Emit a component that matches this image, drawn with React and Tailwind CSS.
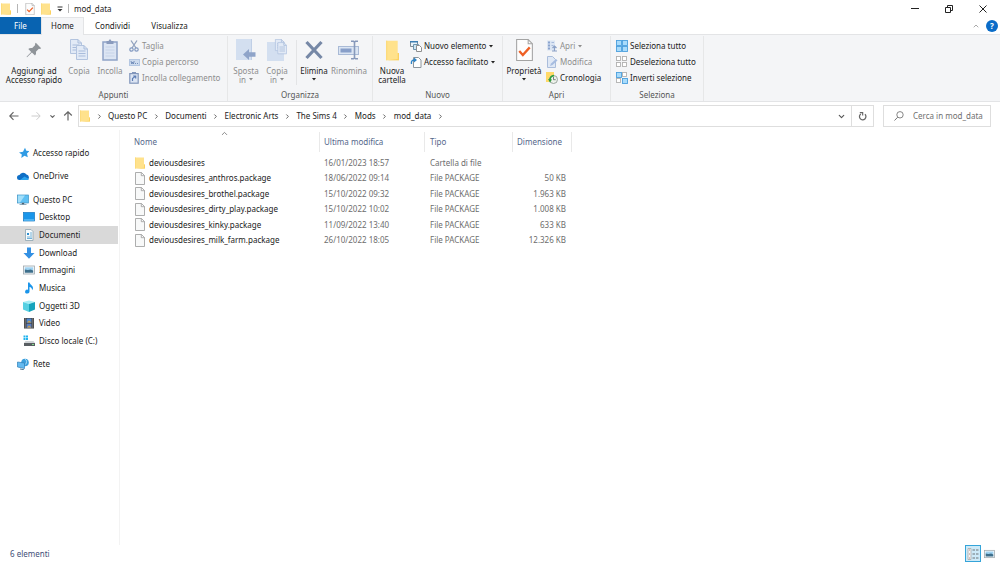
import { ChevronDown, ChevronRight, ChevronUp } from 'lucide-react';

function FolderIcon({ className }) {
  return (
    <svg viewBox="0 0 10 13" className={className} preserveAspectRatio="none">
      <path d="M0 .5h9v7.500h1v4.500H0z" fill="#ffe28c" />
      <path d="M9 8h1v4.500H1l8-.8z" fill="#fbd160" />
      <path d="M0 .5h1v12H0z" fill="#fcdb7c" />
    </svg>
  );
}

function FileIcon() {
  return (
    <svg viewBox="0 0 10 13" className="h-[13px] w-[10px] shrink-0">
      <path d="M.5.5h6l3 3v9h-9z" fill="#f8f9f9" stroke="#999" strokeWidth=".8" />
      <path d="M6.3.5v3.2h3.2" fill="none" stroke="#999" strokeWidth=".8" />
    </svg>
  );
}

function CheckPage({ className }) {
  return (
    <svg viewBox="0 0 16 21" className={className}>
      <path d="M.5.5h11l4 4v16H.5z" fill="#fdfdfd" stroke="#a3a3a3" />
      <path d="M11.5.5v4h4" fill="none" stroke="#a3a3a3" />
      <path d="M3 11.5l3.4 3.7L13 8" fill="none" stroke="#ee5f24" strokeWidth="2.2" />
    </svg>
  );
}

function PinIcon() {
  return (
    <svg viewBox="0 0 16 16" className="h-4 w-4">
      <path d="M9.800.8l5.400 5.400-1.300.9-1-.3-3 3c.4 1.600 0 2.800-.9 3.800L5.900 10.500 1 15.200l-.4-.4 4.600-4.900L2.300 7c1-.9 2.300-1.300 3.900-.9l3-3-.3-1z" fill="#8f9499" />
    </svg>
  );
}

function Page({ x, y }) {
  return (
    <g transform={`translate(${x} ${y})`}>
      <path d="M.5.5h7.500l3.500 3.500v10.500H.5z" fill="#e2eaf6" stroke="#b3c4df" />
      <path d="M8 .5V4h3.500M2.500 6h7M2.500 8.500h7M2.500 11h7" fill="none" stroke="#a9bcdb" />
    </g>
  );
}

function CopyIcon() {
  return (
    <svg viewBox="0 0 19 22" className="h-[22px] w-[19px]">
      <Page x={0} y={0} />
      <Page x={6} y={6} />
    </svg>
  );
}

function PasteIcon() {
  return (
    <svg viewBox="0 0 16 22" className="h-[22px] w-4">
      <rect x="1" y="3" width="14" height="18" fill="#dce5f3" stroke="#8fa3c7" strokeWidth="1.500" />
      <path d="M4.500 2h2l1.500-2 1.500 2h2v3h-7z" fill="#8a9bbd" />
      <path d="M3.500 8h9M3.500 11h9M3.500 14h9M3.500 17h9" stroke="#c6d3e8" />
    </svg>
  );
}

function MoveIcon() {
  return (
    <svg viewBox="0 0 20 22" className="h-[22px] w-5">
      <path d="M0 0h16v21H0z" fill="#d3dff0" />
      <path d="M15 0h1v21h-1z" fill="#c0cfe6" />
      <path d="M7 15.500l6-5.500v3.300h6.500v4.500H13V21z" fill="#8fa4c9" />
    </svg>
  );
}

function CopyToIcon() {
  return (
    <svg viewBox="0 0 20 22" className="h-[22px] w-5">
      <path d="M0 3h17v19H0z" fill="#d3dff0" />
      <g transform="translate(8 0) scale(.8)">
        <Page x={0} y={0} />
        <Page x={3} y={4} />
      </g>
    </svg>
  );
}

function DeleteIcon() {
  return (
    <svg viewBox="0 0 18 20" className="h-5 w-[18px]">
      <path d="M1.500 2l15 16M16.500 2l-15 16" stroke="#7688a6" strokeWidth="3.200" />
    </svg>
  );
}

function RenameIcon() {
  return (
    <svg viewBox="0 0 22 20" className="h-5 w-[22px]">
      <rect x=".5" y="6.500" width="20" height="8" fill="#dbe5f3" stroke="#a9bad6" />
      <rect x="2.500" y="8.500" width="11" height="4" fill="#889fc9" />
      <path d="M13 1.200h2.500l1 1 1-1H20M13 18.800h2.500l1-1 1 1H20M16.500 2v16" fill="none" stroke="#8799bb" strokeWidth="1.600" />
    </svg>
  );
}

function CutIcon() {
  return (
    <svg viewBox="0 0 10 12" className="h-3 w-[10px]">
      <path d="M2 .5L7 8M8 .5L3 8" stroke="#8fa0bd" strokeWidth="1.300" />
      <circle cx="2.500" cy="9.500" r="1.700" fill="none" stroke="#8299c0" strokeWidth="1.200" />
      <circle cx="7.500" cy="9.500" r="1.700" fill="none" stroke="#8299c0" strokeWidth="1.200" />
    </svg>
  );
}

function PathIcon() {
  return (
    <svg viewBox="0 0 11 7" className="h-[7px] w-[11px]">
      <rect x=".5" y=".5" width="10" height="6" fill="#cddbee" stroke="#b4c7e2" />
      <path d="M2 2l.8 3 .8-2 .8 2 .8-3M6 4.500h1M8 4.500h1" fill="none" stroke="#6b87b5" strokeWidth=".9" />
    </svg>
  );
}

function ShortcutPasteIcon() {
  return (
    <svg viewBox="0 0 10 12" className="h-3 w-[10px]">
      <rect x=".8" y="1.600" width="8.400" height="9.600" fill="#dce5f3" stroke="#8296bb" strokeWidth="1.200" />
      <path d="M3 0h4v2H3z" fill="#8296bb" />
      <path d="M3.500 9V6.500L6 4.500M4.200 4h2.500v2.500" fill="none" stroke="#5f7eb5" strokeWidth="1.200" />
    </svg>
  );
}

function NewItemIcon() {
  return (
    <svg viewBox="0 0 12 12" className="h-3 w-3">
      <path d="M.5 1.500h7v5h-7z" fill="#eaf5fb" stroke="#7f8b94" />
      <path d="M0 1h8v1.500H0z" fill="#3c7fb4" />
      <path d="M3.500 4.500h5v5h-5z" fill="#cfe7f4" stroke="#6f95ad" />
      <path d="M6.500 5.500h3l2 2v4h-5z" fill="#fff" stroke="#8f8f8f" />
    </svg>
  );
}

function EasyAccessIcon() {
  return (
    <svg viewBox="0 0 12 12" className="h-3 w-3">
      <path d="M3.500 1.500h5l2.500 2.500v7.500H3.500z" fill="#fff" stroke="#8c959c" />
      <path d="M1.500 8c-.5-3 .5-4 3.500-4" fill="none" stroke="#2f85c7" strokeWidth="1.400" />
      <path d="M4 1.500L7 4 4 6.500z" fill="#2f85c7" />
    </svg>
  );
}

function OpenIcon() {
  return (
    <svg viewBox="0 0 12 12" className="h-3 w-3">
      <path d="M1 .5h8v10H1z" fill="#dbe5f3" />
      <path d="M2 1.500h2v2H2zM2 4.500h2v2H2zM2 7.500h2v2H2z" fill="#8ba4ce" />
      <path d="M5.500 2.500h2.500M5.500 5.500h2" stroke="#a7badb" />
      <path d="M8.500 11V6M6.500 8l2-2 2 2M6 11h5" fill="none" stroke="#8aa0c6" strokeWidth="1.200" />
    </svg>
  );
}

function EditIcon() {
  return (
    <svg viewBox="0 0 12 12" className="h-3 w-3">
      <path d="M1.500.5h5l3 3v8h-8z" fill="#dfe8f5" stroke="#aabddb" />
      <path d="M4 10l1-2.500L10 3l1.500 1.500L6.500 9z" fill="#a6bce0" />
    </svg>
  );
}

function HistoryIcon() {
  return (
    <svg viewBox="0 0 12 12" className="h-3 w-3">
      <path d="M0 0h8v10H0z" fill="#ffd968" />
      <circle cx="7.500" cy="7.500" r="4" fill="#eef2ec" stroke="#8f9b93" strokeWidth=".9" />
      <path d="M7.500 5v2.700h2.200" fill="none" stroke="#66706a" strokeWidth=".9" />
      <path d="M8 3.700a4 4 0 0 0-4 4.500" fill="none" stroke="#2f9d3f" strokeWidth="1.700" />
      <path d="M2 7l4 .5-2 3z" fill="#2f9d3f" />
    </svg>
  );
}

const on = { fill: '#a8dbfb', stroke: '#4a9fdd' };
const off = { fill: '#fff', stroke: '#b0b0b0' };

function SelectIcon({ cells }) {
  return (
    <svg viewBox="0 0 12 12" className="h-3 w-3">
      {cells.map((active, i) => (
        <rect
          key={i}
          x={i % 2 ? 6.5 : 0.5}
          y={i > 1 ? 6.5 : 0.5}
          width={active ? 5 : 4}
          height={active ? 5 : 4}
          {...(active ? on : off)}
          strokeWidth=".9"
        />
      ))}
    </svg>
  );
}

/* sidebar icons */

const sideIcons = {
  star: <path d="M8 .8l1.300 3 3.200.2-2.500 2.500.8 3.700-3.300-1.500L4.300 11l.5-3.500L2 5.500l4-.7z" fill="#2f9be4" />,
  cloud: (
    <>
      <path d="M2.500 10A2.500 2.500 0 0 1 2.500 5 4 4 0 0 1 9.500 4.500 3 3 0 0 1 10.500 10z" fill="#0f6fc6" />
      <path d="M3 10l4.500-3.500L12 9a2 2 0 0 1-1.500 1z" fill="#2ba4ee" />
    </>
  ),
  pc: (
    <>
      <rect x=".5" y="1" width="11" height="8" fill="#5fc0f3" stroke="#3f93c4" strokeWidth=".7" />
      <path d="M1 1.500h7L3 8.500H1z" fill="#a3dffa" />
      <path d="M5 9h2v1.500H5zM2.500 10.500h7" stroke="#7b99ad" strokeWidth=".8" />
    </>
  ),
  desktop: (
    <>
      <rect x=".5" y="1.500" width="11" height="8.500" fill="#1a96ea" stroke="#1377c0" strokeWidth=".7" />
      <path d="M1 9h10" stroke="#7fd0ff" />
    </>
  ),
  doc: (
    <>
      <path d="M2.500.5h5.500l2 2v9H2.500z" fill="#f7fbfd" stroke="#8ca3b0" strokeWidth=".8" />
      <path d="M4 4h2v2H4z" fill="#2f8fd0" />
      <path d="M7 4h2M7 6h2M4 8h5M4 9.500h5" stroke="#62a8d4" strokeWidth=".9" />
    </>
  ),
  down: <path d="M4 .5h4v5.500h3.500L6 11.800.5 6H4z" fill="#3390e3" />,
  image: (
    <>
      <rect x=".5" y="2" width="11" height="8" fill="#f5f8fa" stroke="#9ca6ac" strokeWidth=".8" />
      <path d="M1.800 3.300h8.400v3H1.800z" fill="#9fd3f2" />
      <path d="M1.800 5.500l3 .5 3-.5 2.400 1v2.200H1.800z" fill="#3d6f8c" />
    </>
  ),
  music: <path d="M5 .5h1.500c.3 2 3.500 3 3.500 5.500 0 1-.5 1.800-1 2.300.3-2-1-3-2.500-3.300v4.500A2.200 2 0 1 1 5 7.700z" fill="#1b95ea" />,
  cube: (
    <>
      <path d="M0 2l6-1.500L12 2 6 4z" fill="#a5edf5" />
      <path d="M0 2l6 2v8l-6-2.500z" fill="#56d0e2" />
      <path d="M6 4l6-2v7.500L6 12z" fill="#16a4bd" />
    </>
  ),
  video: (
    <>
      <path d="M1 1h10v10.500H1z" fill="#3c3c3c" />
      <path d="M3.500 1.500h5v4.300h-5z" fill="#4e86cc" />
      <path d="M3.500 6.600h5v4.300h-5z" fill="#5b7fc0" />
      <path d="M4 5.500l2-2 2.500 2M4 10.500l2-2 2.500 2" fill="#d2a044" />
      <path d="M2.200 1.500v10M9.800 1.500v10" stroke="#cfcfcf" strokeDasharray="1 1" strokeWidth=".9" />
    </>
  ),
  disk: (
    <>
      <path d="M.5.500h2v2h-2zM3 .5h2v2H3zM.5 3h2v2h-2zM3 3h2v2H3z" fill="#22b4ee" />
      <path d="M2.500 6h8L12 8H1z" fill="#cfd3d6" />
      <path d="M1 8h11v3H1z" fill="#595e62" />
      <path d="M9 9.500h2" stroke="#7fe08d" />
    </>
  ),
  network: (
    <>
      <circle cx="8" cy="4.500" r="3.800" fill="#3c9fdc" />
      <path d="M8 1c2 1 2 3.500.5 5.500" fill="none" stroke="#a6dbf7" />
      <path d="M.5 4l7 1v5.500l-7-1.500z" fill="#64baf0" stroke="#2f7fb8" strokeWidth=".7" />
      <path d="M3 11l4 .8" stroke="#5c7f96" />
    </>
  ),
};

const pcItems = [
  ['desktop', 'Desktop'],
  ['doc', 'Documenti'],
  ['down', 'Download'],
  ['image', 'Immagini'],
  ['music', 'Musica'],
  ['cube', 'Oggetti 3D'],
  ['video', 'Video'],
  ['disk', 'Disco locale (C:)'],
];

const files = [
  ['deviousdesires', '16/01/2023 18:57', 'Cartella di file', ''],
  ['deviousdesires_anthros.package', '18/06/2022 09:14', 'File PACKAGE', '50 KB'],
  ['deviousdesires_brothel.package', '15/10/2022 09:32', 'File PACKAGE', '1.963 KB'],
  ['deviousdesires_dirty_play.package', '15/10/2022 10:02', 'File PACKAGE', '1.008 KB'],
  ['deviousdesires_kinky.package', '11/09/2022 13:40', 'File PACKAGE', '633 KB'],
  ['deviousdesires_milk_farm.package', '26/10/2022 18:05', 'File PACKAGE', '12.326 KB'],
];

const crumbs = ['Questo PC', 'Documenti', 'Electronic Arts', 'The Sims 4', 'Mods', 'mod_data'];

function Caret() {
  return (
    <svg viewBox="0 0 4 3" className="inline h-[3px] w-1">
      <path d="M0 0h4L2 2.500z" fill="currentColor" />
    </svg>
  );
}

function BigButton({ icon, lines, caret, disabled, className }) {
  return (
    <button
      disabled={disabled}
      className={`flex flex-col items-center pt-[2px] whitespace-nowrap leading-[9px] ${disabled ? 'text-[#8d8d8d]' : ''} ${className}`}
    >
      <span className="mb-1 flex h-6 items-center justify-center">{icon}</span>
      <span>{lines[0]}</span>
      <span className="flex h-[9px] items-center gap-[3px]">
        {lines[1]}
        {caret && <Caret />}
      </span>
    </button>
  );
}

function SmallButton({ icon, label, caret, disabled }) {
  return (
    <button
      disabled={disabled}
      className={`flex h-4 items-center gap-[2px] whitespace-nowrap ${disabled ? 'text-[#8d8d8d]' : ''}`}
    >
      <span className="flex w-3 justify-center">{icon}</span>
      {label}
      {caret && <span className="ml-px flex"><Caret /></span>}
    </button>
  );
}

function Group({ title, className, children }) {
  return (
    <section className={`flex flex-col border-r border-[#e6e7e8] ${className}`}>
      <div className="flex flex-1">{children}</div>
      <h2 className="h-3 text-center leading-3 text-[#555]">{title}</h2>
    </section>
  );
}

function SideLink({ icon, label, child, active }) {
  return (
    <a
      href="#"
      className={`flex min-h-0 items-center gap-1 whitespace-nowrap ${child ? 'pl-[23px]' : 'pl-[17px]'} ${active ? 'bg-[#d9d9d9]' : ''}`}
    >
      <svg viewBox="0 0 12 12" className="h-3 w-3 shrink-0">{sideIcons[icon]}</svg>
      {label}
    </a>
  );
}

function Ribbon() {
  return (
    <div className="flex h-[68px] border-y border-[#e3e4e6] bg-[#f4f5f7] pt-px">
      <Group title="Appunti" className="w-[228px]">
        <BigButton className="ml-1 w-[60px]" icon={<PinIcon />} lines={['Aggiungi ad', 'Accesso rapido']} />
        <BigButton className="w-[30px]" icon={<CopyIcon />} lines={['Copia']} disabled />
        <BigButton className="w-[32px]" icon={<PasteIcon />} lines={['Incolla']} disabled />
        <div className="ml-[2px] pt-[2px]">
          <SmallButton icon={<CutIcon />} label="Taglia" disabled />
          <SmallButton icon={<PathIcon />} label="Copia percorso" disabled />
          <SmallButton icon={<ShortcutPasteIcon />} label="Incolla collegamento" disabled />
        </div>
      </Group>
      <Group title="Organizza" className="w-[145px]">
        <BigButton className="ml-[2px] w-8" icon={<MoveIcon />} lines={['Sposta', 'in']} caret disabled />
        <BigButton className="w-[30px]" icon={<CopyToIcon />} lines={['Copia', 'in']} caret disabled />
        <div className="mt-1 mb-1 ml-1 border-r border-[#e3e4e6]" />
        <BigButton className="w-[34px]" icon={<DeleteIcon />} lines={['Elimina']} caret />
        <BigButton className="w-9" icon={<RenameIcon />} lines={['Rinomina']} disabled />
      </Group>
      <Group title="Nuovo" className="w-[130px]">
        <BigButton
          className="ml-[2px] w-[34px]"
          icon={<FolderIcon className="h-[21px] w-[13px]" />}
          lines={['Nuova', 'cartella']}
        />
        <div className="ml-px pt-[2px]">
          <SmallButton icon={<NewItemIcon />} label="Nuovo elemento" caret />
          <SmallButton icon={<EasyAccessIcon />} label="Accesso facilitato" caret />
        </div>
      </Group>
      <Group title="Apri" className="w-[108px]">
        <BigButton className="ml-[2px] w-[38px]" icon={<CheckPage className="h-[22px] w-[17px]" />} lines={['Proprietà']} caret />
        <div className="ml-[3px] pt-[2px]">
          <SmallButton icon={<OpenIcon />} label="Apri" caret disabled />
          <SmallButton icon={<EditIcon />} label="Modifica" disabled />
          <SmallButton icon={<HistoryIcon />} label="Cronologia" />
        </div>
      </Group>
      <Group title="Seleziona" className="w-[93px]">
        <div className="ml-[5px] pt-[2px]">
          <SmallButton icon={<SelectIcon cells={[1, 1, 1, 1]} />} label="Seleziona tutto" />
          <SmallButton icon={<SelectIcon cells={[0, 0, 0, 0]} />} label="Deseleziona tutto" />
          <SmallButton icon={<SelectIcon cells={[1, 0, 0, 1]} />} label="Inverti selezione" />
        </div>
      </Group>
    </div>
  );
}

function AddressBar() {
  return (
    <div className="flex h-7 items-center pr-[9px]">
      <div className="flex w-[78px] items-center text-[#666]">
        <button aria-label="Indietro" className="ml-[9px]">
          <svg viewBox="0 0 10 10" className="h-[10px] w-[10px]"><path d="M9.500 5H1M4.500 1.200L.8 5l3.700 3.800" fill="none" stroke="#666" strokeWidth="1.200" /></svg>
        </button>
        <button aria-label="Avanti" className="ml-3">
          <svg viewBox="0 0 10 10" className="h-[10px] w-[10px]"><path d="M.5 5H9M5.500 1.200L9.200 5 5.500 8.800" fill="none" stroke="#ccc" /></svg>
        </button>
        <button aria-label="Percorsi recenti" className="ml-2">
          <ChevronDown size={7} strokeWidth={4} />
        </button>
        <button aria-label="Su" className="ml-[7px]">
          <svg viewBox="0 0 10 10" className="h-[10px] w-[10px]"><path d="M5 9.500V1M1.200 4.500L5 .8l3.800 3.700" fill="none" stroke="#666" strokeWidth="1.200" /></svg>
        </button>
      </div>
      <div className="flex h-[22px] flex-1 items-center border border-[#dedede] pl-px">
        <FolderIcon className="h-3 w-[10px]" />
        <nav className="flex flex-1 items-center">
          {crumbs.map((name) => (
            <span key={name} className="flex items-center">
              <span className="flex w-[18px] justify-center">
                <ChevronRight size={7} strokeWidth={3} color="#555" />
              </span>
              <button>{name}</button>
            </span>
          ))}
          <span className="flex w-[18px] justify-center">
            <ChevronRight size={7} strokeWidth={3} color="#555" />
          </span>
        </nav>
        <button aria-label="Località precedenti" className="flex w-5 justify-center">
          <ChevronDown size={9} strokeWidth={3} color="#555" />
        </button>
        <button aria-label="Aggiorna" className="flex h-full w-[22px] items-center justify-center border-l border-[#dedede]">
          <svg viewBox="0 0 10 10" className="h-[9px] w-[9px]">
            <path d="M7.700 2.500a3.600 3.600 0 1 1-4.600-.3" fill="none" stroke="#666" strokeWidth="1.400" />
            <path d="M2 .7h3.200v3.300" fill="none" stroke="#666" strokeWidth="1.300" />
          </svg>
        </button>
      </div>
      <label className="ml-[9px] flex h-[22px] w-[108px] items-center border border-[#dedede]">
        <svg viewBox="0 0 10 10" className="ml-[10px] h-[10px] w-[10px] shrink-0">
          <circle cx="6" cy="3.800" r="3.200" fill="none" stroke="#777" strokeWidth=".9" />
          <path d="M3.700 6.200L.5 9.500" stroke="#777" />
        </svg>
        <input
          type="text"
          aria-label="Cerca"
          placeholder="Cerca in mod_data"
          className="ml-[9px] w-full min-w-0 outline-none placeholder:text-[#707070]"
        />
      </label>
    </div>
  );
}

function FileTable() {
  return (
    <table className="mt-[2px] w-[452px] table-fixed border-separate border-spacing-0 text-left whitespace-nowrap">
      <colgroup>
        <col className="w-[200px]" />
        <col className="w-[105px]" />
        <col className="w-[88px]" />
        <col className="w-[59px]" />
      </colgroup>
      <thead>
        <tr className="h-5 text-[#54678a]">
          <th className="relative border-r border-[#e9e9e9] p-0 pl-[14px] font-normal">
            Nome
            <ChevronUp size={9} strokeWidth={2} color="#666" className="absolute top-[-3px] left-[100px]" />
          </th>
          <th className="border-r border-[#e9e9e9] p-0 pl-1 font-normal">Ultima modifica</th>
          <th className="border-r border-[#e9e9e9] p-0 pl-[5px] font-normal">Tipo</th>
          <th className="border-r border-[#e9e9e9] p-0 pl-1 font-normal">Dimensione</th>
        </tr>
      </thead>
      <tbody className="text-[#6d6d6d] before:block before:h-[3px]">
        {files.map(([name, date, type, size], i) => (
          <tr key={name} className={i % 2 ? 'h-4' : 'h-[15px]'}>
            <td className="p-0 pl-[15px]">
              <div className="flex items-center gap-1 text-[#1a1a1a]">
                {i === 0 ? <FolderIcon className="h-3 w-[10px]" /> : <FileIcon />}
                {name}
              </div>
            </td>
            <td className="p-0 pl-1">{date}</td>
            <td className="p-0 pl-[5px]">{type}</td>
            <td className="p-0 pr-[6px] text-right">{size}</td>
          </tr>
        ))}
      </tbody>
    </table>
  );
}

export default function App() {
  return (
    <div className="flex h-screen flex-col bg-white font-['Noto_Sans',sans-serif] text-[8px] leading-3 text-[#222]">
      <header className="flex h-[17px] items-center pl-px">
        <FolderIcon className="h-3 w-[10px]" />
        <span className="ml-[6px] h-[9px] border-l border-[#b5b5b5]" />
        <button aria-label="Proprietà" className="ml-[7px]"><CheckPage className="h-3 w-[10px]" /></button>
        <button aria-label="Nuova cartella" className="ml-[6px]"><FolderIcon className="h-3 w-[10px]" /></button>
        <button aria-label="Personalizza" className="ml-[6px]">
          <svg viewBox="0 0 6 6" className="h-[6px] w-[6px]"><path d="M.5 1h5" stroke="#333" /><path d="M.5 3h5L3 5.500z" fill="#333" /></svg>
        </button>
        <span className="ml-[5px] h-[9px] border-l border-[#b5b5b5]" />
        <h1 className="ml-[5px] flex-1">mod_data</h1>
        <button aria-label="Riduci a icona" className="flex w-[34px] justify-center">
          <svg viewBox="0 0 8 8" className="h-2 w-2"><path d="M0 3.500h8" stroke="#222" /></svg>
        </button>
        <button aria-label="Ripristina" className="flex w-[34px] justify-center">
          <svg viewBox="0 0 8 8" className="h-2 w-2"><path d="M.5 2.500h5v5h-5zM2.500 2.500v-2h5v5h-2" fill="none" stroke="#222" /></svg>
        </button>
        <button aria-label="Chiudi" className="flex w-[34px] justify-center">
          <svg viewBox="0 0 8 8" className="h-2 w-2"><path d="M.5.500l7 7M7.500.500l-7 7" stroke="#222" /></svg>
        </button>
      </header>
      <div className="flex h-[17px] items-stretch">
        <button className="w-[41px] bg-[#0863b1] text-white">File</button>
        <button className="z-10 -mb-px w-[43px] border-x border-t border-[#e3e4e6] bg-[#f4f5f7] pb-[2px]">Home</button>
        <button className="w-[57px]">Condividi</button>
        <button className="w-[57px]">Visualizza</button>
        <div className="flex flex-1 items-center justify-end gap-[6px] pr-[2px]">
          <button aria-label="Riduci barra multifunzione"><ChevronUp size={8} strokeWidth={3} color="#aaa" /></button>
          <button aria-label="Guida" className="h-3 w-3 rounded-full bg-[#0a6cc8] font-bold text-white">?</button>
        </div>
      </div>
      <Ribbon />
      <AddressBar />
      <main className="flex min-h-0 flex-1">
        <aside className="flex w-[120px] flex-col border-r border-[#f3f3f3] pt-[14px] pr-px">
          <div className="grid h-[18px]"><SideLink icon="star" label="Accesso rapido" /></div>
          <div className="mt-[5px] grid h-[18px]"><SideLink icon="cloud" label="OneDrive" /></div>
          <div className="mt-[6px] grid h-[159px] auto-rows-fr">
            <SideLink icon="pc" label="Questo PC" />
            {pcItems.map(([icon, label]) => (
              <SideLink key={label} icon={icon} label={label} child active={label === 'Documenti'} />
            ))}
          </div>
          <div className="mt-[5px] grid h-[18px]"><SideLink icon="network" label="Rete" /></div>
        </aside>
        <section className="flex-1">
          <FileTable />
        </section>
      </main>
      <footer className="flex h-[17px] items-center text-[#3f4f78]">
        <span className="ml-[10px] flex-1">6 elementi</span>
        <button aria-label="Dettagli" className="flex h-[17px] w-4 items-center justify-center border border-[#35a4d9] bg-[#cdeaf8]">
          <svg viewBox="0 0 12 12" className="h-3 w-3">
            <path d="M1 .5h3v11H1z" fill="#f5f5f5" stroke="#aaa" strokeWidth=".8" />
            <path d="M2 2h1M2 6h1M2 10h1" stroke="#b98f86" />
            <path d="M5.500 2h2.500M9 2h2.500M5.500 6h2.500M9 6h2.500M5.500 10h2.500M9 10h2.500" stroke="#6e7478" />
          </svg>
        </button>
        <button aria-label="Icone grandi" className="mr-[5px] ml-[3px]">
          <svg viewBox="0 0 12 12" className="h-3 w-[11px]">{sideIcons.image}</svg>
        </button>
      </footer>
    </div>
  );
}
